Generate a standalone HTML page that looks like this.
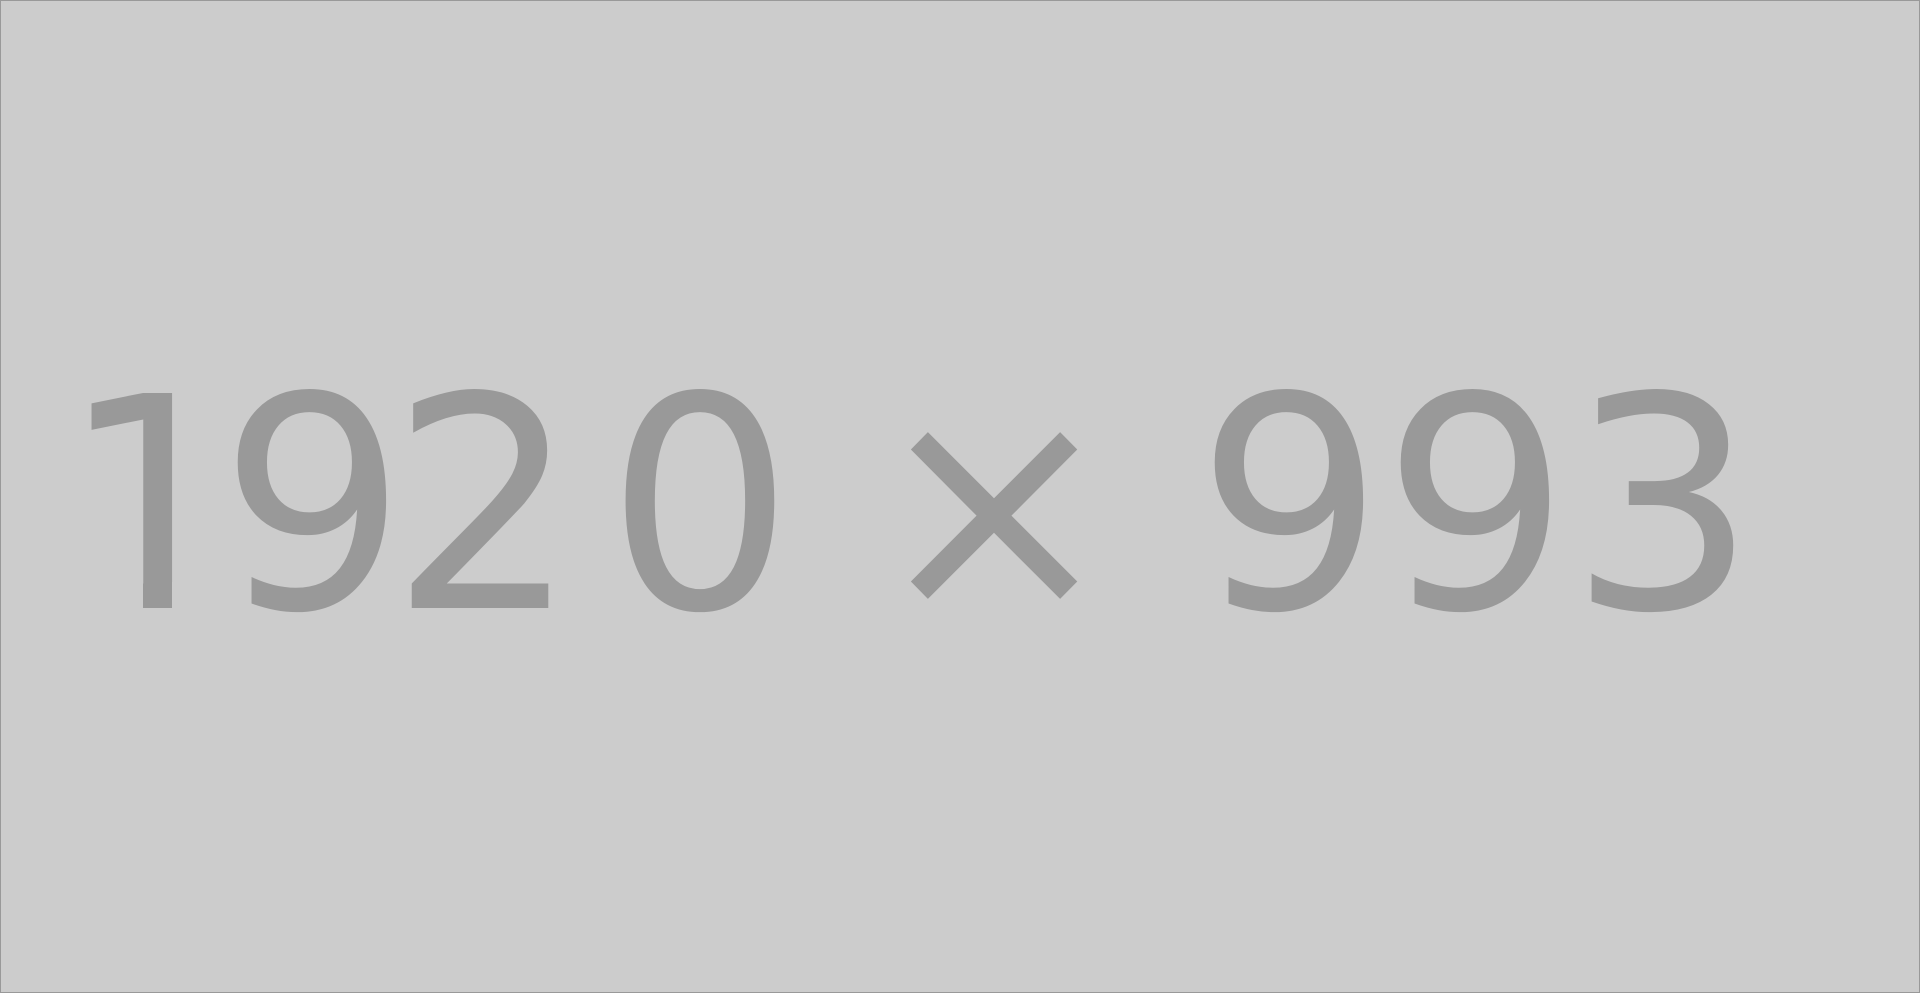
<!DOCTYPE html>
<html><head><meta charset="utf-8"><style>
html,body{margin:0;padding:0;width:1920px;height:993px;overflow:hidden;background:#cccccc}
</style></head><body>
<svg width="1920" height="993" xmlns="http://www.w3.org/2000/svg" style="display:block">
<rect x="0.5" y="0.5" width="1919" height="992" fill="#cccccc" stroke="#999999" stroke-width="1"/>
<g font-family="DejaVu Sans, sans-serif" font-size="295" fill="#999999" text-anchor="middle">
<text x="153" y="608">1</text>
<text x="313" y="608">9</text>
<text x="484" y="608">2</text>
<text x="700" y="608">0</text>
<text x="994" y="608">×</text>
<text x="1290" y="608">9</text>
<text x="1476" y="608">9</text>
<text x="1663" y="608">3</text>
</g>
<rect x="95" y="582" width="48" height="30" fill="#cccccc"/>
<rect x="172" y="582" width="53" height="30" fill="#cccccc"/>
</svg>
</body></html>
